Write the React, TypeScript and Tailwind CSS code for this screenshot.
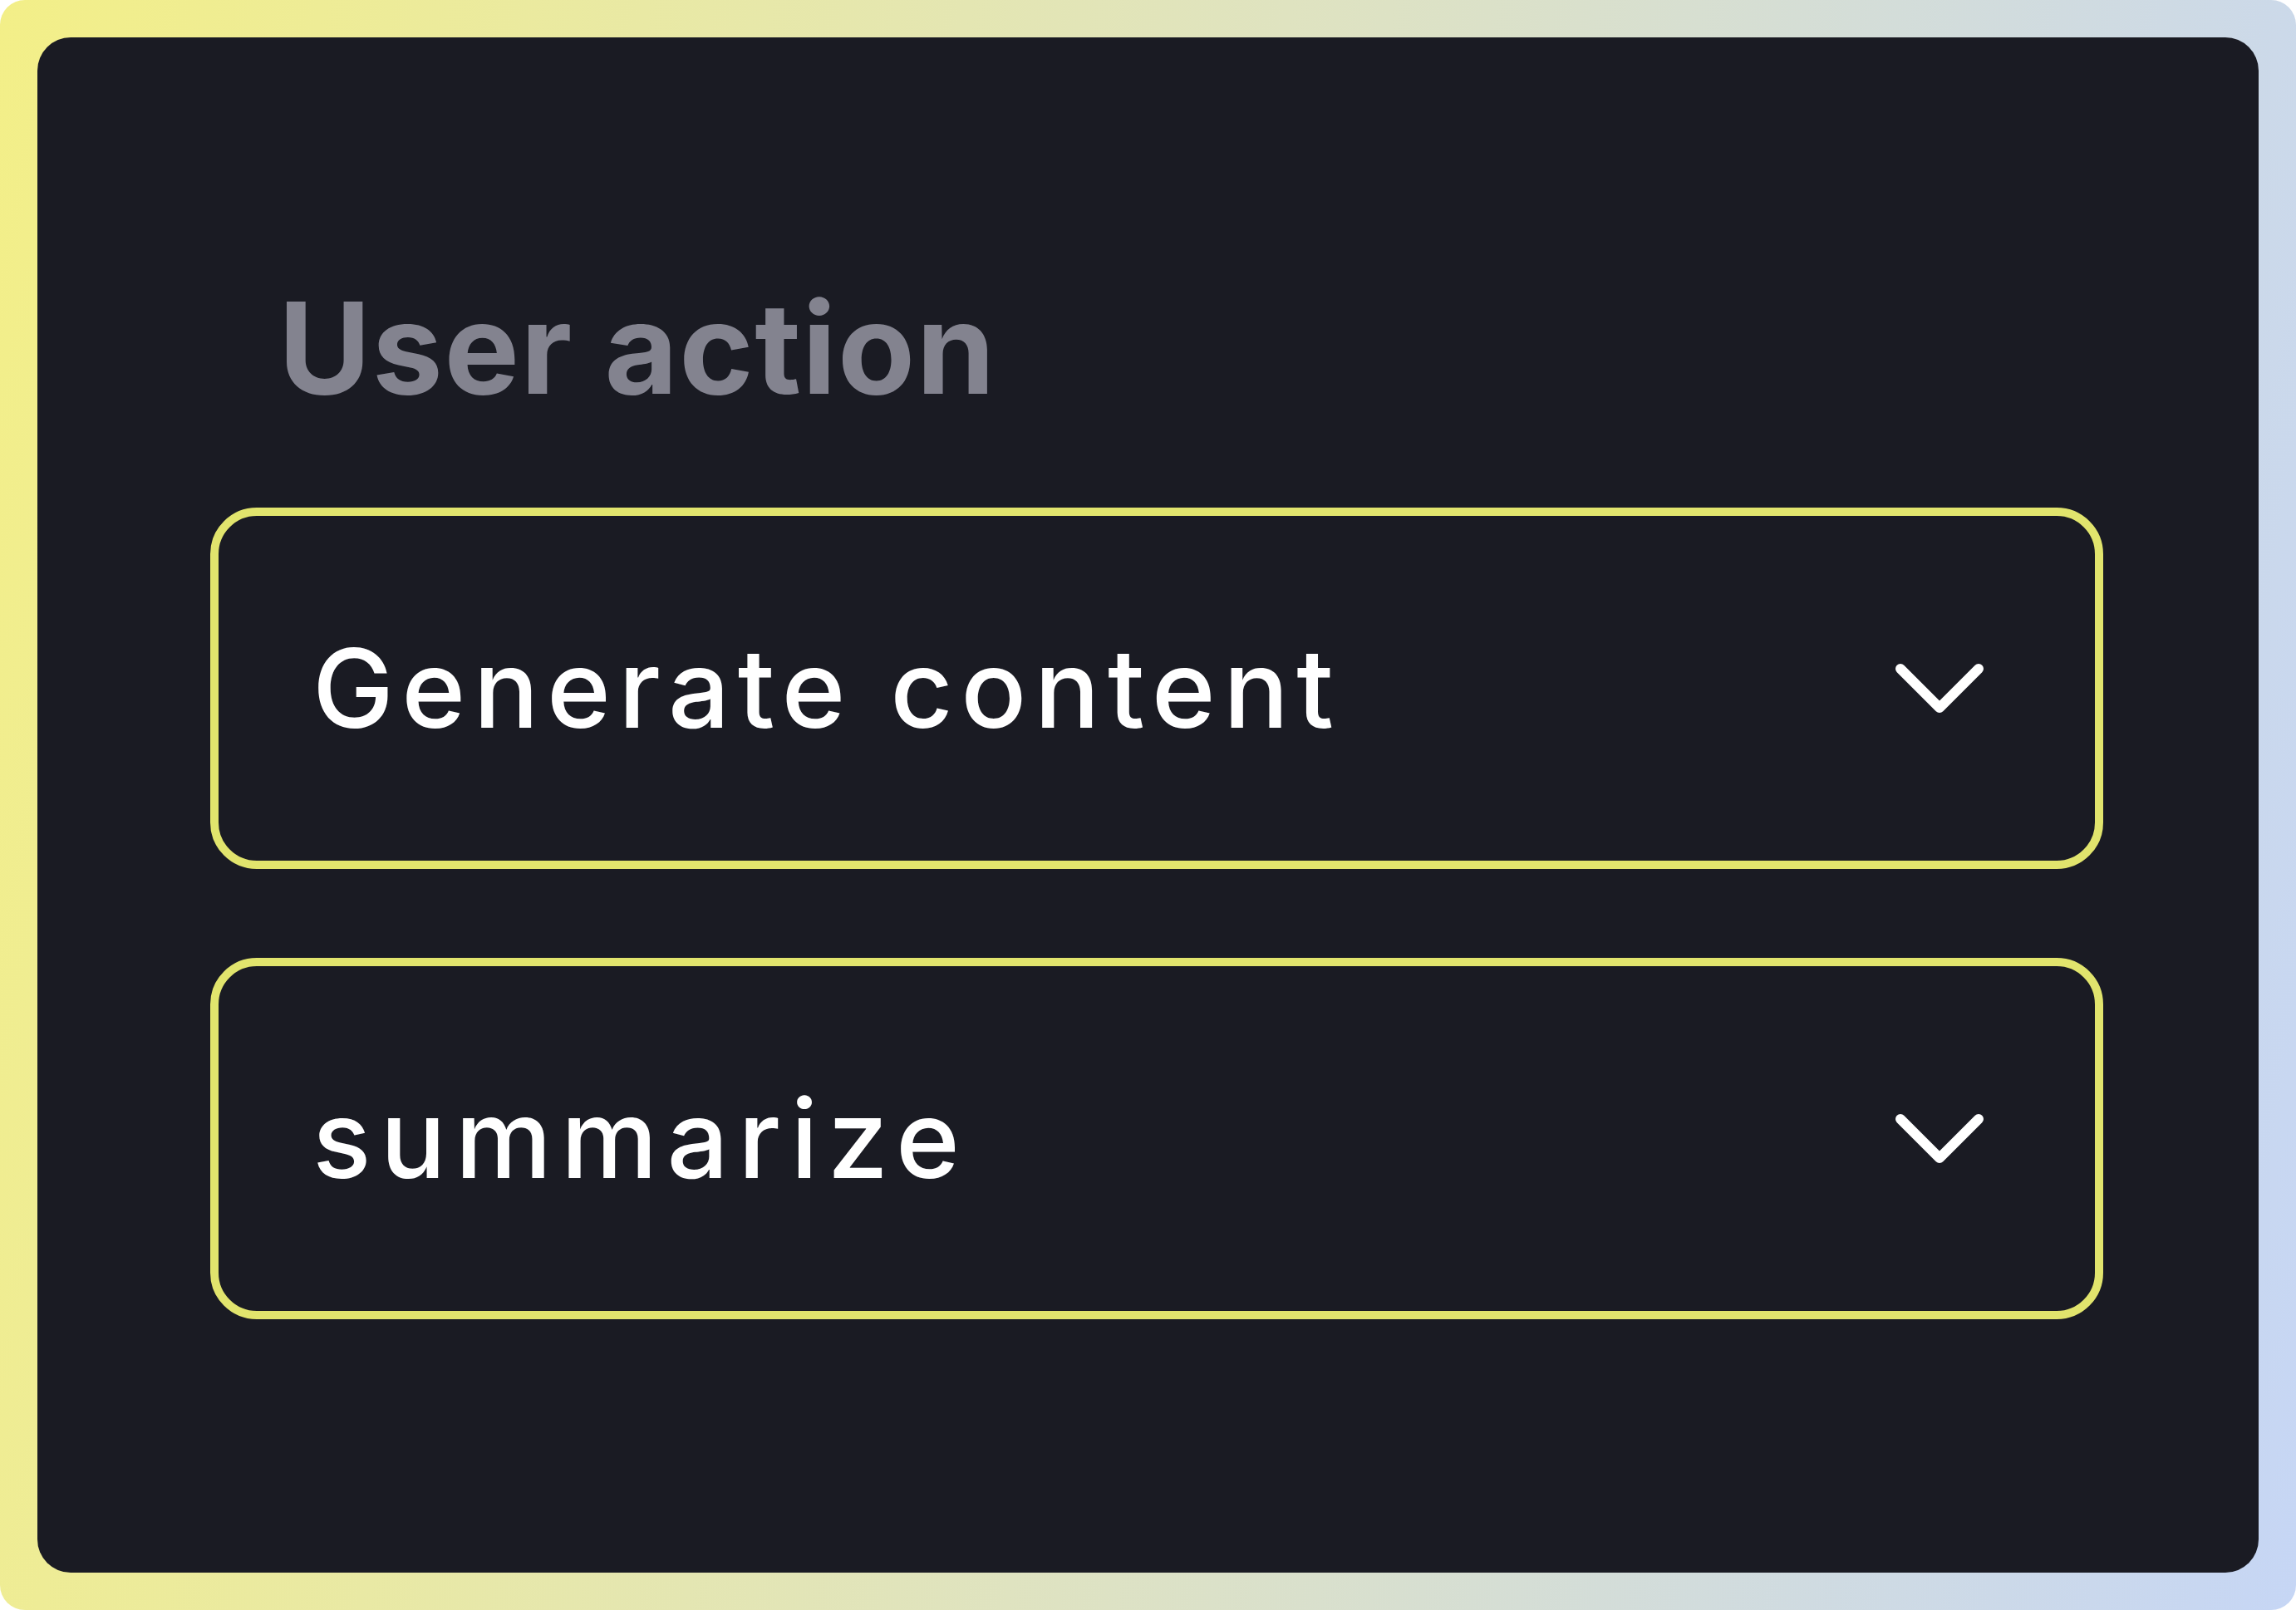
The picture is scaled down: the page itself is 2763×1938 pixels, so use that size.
import React from "react";

function Chevron() {
  return (
    <svg width="106" height="60" viewBox="0 0 106 60" fill="none" className="shrink-0">
      <polyline points="6,6 53,53 100,6" stroke="#ffffff" strokeWidth="12" strokeLinecap="round" strokeLinejoin="round" />
    </svg>
  );
}

function SelectBox({ label, tracking }: { label: string; tracking: string }) {
  return (
    <div className="flex h-[435px] w-[2278px] items-center justify-between rounded-[56px] border-[10px] border-[#e1e46d] pl-[113px] pr-[134px]">
      <span className={`text-[131px] font-medium leading-none text-white [font-family:Inter,'Noto_Sans',sans-serif] ${tracking}`}>
        {label}
      </span>
      <Chevron />
    </div>
  );
}

export default function App() {
  return (
    <div className="h-[1938px] w-[2763px] rounded-[30px] bg-[linear-gradient(100deg,#f3ef88_0%,#dfe3c0_50%,#c6d6f5_100%)] p-[45px]">
      <div className="flex h-full flex-col rounded-[40px] bg-[#1a1b23] pl-[208px] pt-[298px]">
        <h1 className="pl-[82px] text-[152px] font-bold leading-none tracking-[0.01em] text-[#83838f] [font-family:Inter,'Noto_Sans',sans-serif]">
          User action
        </h1>
        <div className="mt-[116px] flex flex-col gap-[107px]">
          <SelectBox label="Generate content" tracking="tracking-[0.072em]" />
          <SelectBox label="summarize" tracking="tracking-[0.085em]" />
        </div>
      </div>
    </div>
  );
}
